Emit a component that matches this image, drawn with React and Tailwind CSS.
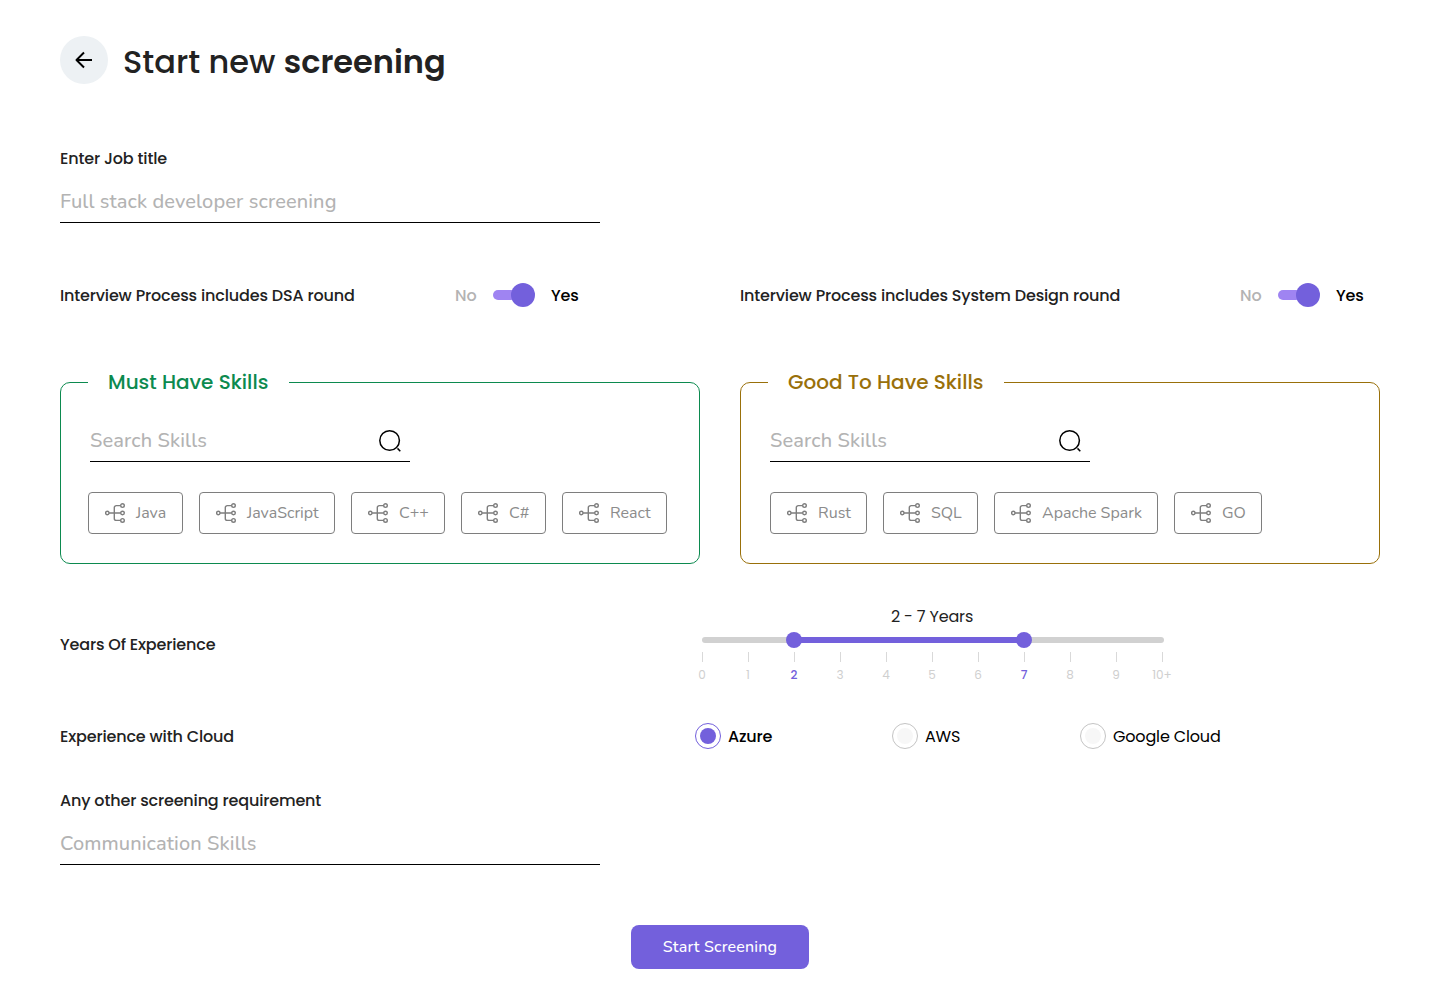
import { useState } from 'react'

const MUST_HAVE = [
  { name: 'Java', className: 'w-[95px]' },
  { name: 'JavaScript', className: 'w-[136px]' },
  { name: 'C++', className: 'w-[94px]' },
  { name: 'C#', className: 'w-[85px]' },
  { name: 'React', className: 'w-[105px]' },
]

const GOOD_TO_HAVE = [
  { name: 'Rust', className: 'w-[97px]' },
  { name: 'SQL', className: 'w-[95px]' },
  { name: 'Apache Spark', className: 'w-[164px]' },
  { name: 'GO', className: 'w-[88px]' },
]

const YEARS = ['0', '1', '2', '3', '4', '5', '6', '7', '8', '9', '10+']

const CLOUDS = [
  { name: 'Azure', className: 'w-[197px]' },
  { name: 'AWS', className: 'w-[188px]' },
  { name: 'Google Cloud', className: 'w-[150px]' },
]

function BackIcon() {
  return (
    <svg width="24" height="24" viewBox="0 0 24 24" fill="none" stroke="#000" strokeWidth="2">
      <path d="M20 12H4.8M12 4.5L4.5 12l7.5 7.5" strokeLinejoin="round" />
    </svg>
  )
}

function SearchIcon() {
  return (
    <svg width="24" height="24" viewBox="0 0 24 24" fill="none" stroke="#000" strokeWidth="1.5">
      <circle cx="11.6" cy="11.5" r="9.8" />
      <path d="M19.5 19.4l2.8 2.8" />
    </svg>
  )
}

function SkillIcon() {
  return (
    <svg className="shrink-0" width="20" height="20" viewBox="0 0 20 20" fill="none" stroke="#7e7e7e" strokeWidth="1.4">
      <circle cx="2.3" cy="10" r="1.7" />
      <circle cx="17.5" cy="2.6" r="1.8" />
      <circle cx="17.5" cy="10" r="1.8" />
      <circle cx="17.5" cy="17.4" r="1.8" />
      <path d="M4 10h11.7M15.7 2.6h-4.4a2 2 0 0 0-2 2v10.8a2 2 0 0 0 2 2h4.4" />
    </svg>
  )
}

function TextField({ label, placeholder }) {
  return (
    <label className="block w-[540px]">
      <span className="block pt-px leading-6 font-medium text-[#222]">{label}</span>
      <input
        type="text"
        placeholder={placeholder}
        className="mt-[11px] block h-[41px] w-full border-b border-black pb-0.5 font-['Nunito','Noto_Sans',sans-serif] text-xl font-medium tracking-[0.005em] outline-none placeholder:text-[#b3b3b3]"
      />
    </label>
  )
}

function Toggle({ label, className }) {
  const [on, setOn] = useState(true)

  return (
    <div className="flex h-6 items-center">
      <span className={`pt-0.5 font-medium whitespace-nowrap text-[#222] ${className}`}>{label}</span>
      <span className={`w-[22px] pt-0.5 font-medium ${on ? 'text-[#b3b3b3]' : 'text-black'}`}>No</span>
      <button
        type="button"
        onClick={() => setOn(!on)}
        className={`mx-4 flex h-6 w-[42px] items-center ${on ? '' : 'flex-row-reverse'}`}
      >
        <span className="-mx-[5px] ml-0 h-2.5 w-[23px] shrink-0 rounded-full bg-[#9f84f2]"></span>
        <span className="size-6 shrink-0 rounded-full bg-[#7360dc]"></span>
      </button>
      <span className={`w-7 pt-0.5 font-medium ${on ? 'text-black' : 'text-[#b3b3b3]'}`}>Yes</span>
    </div>
  )
}

function SkillPanel({ title, skills, className, legendClassName, listClassName }) {
  return (
    <fieldset className={`h-[198px] w-[640px] rounded-[10px] border ${className}`}>
      <legend
        className={`ml-[27px] h-[33px] pl-5 text-xl leading-8 font-medium tracking-normal whitespace-nowrap ${legendClassName}`}
      >
        {title}
      </legend>
      <div className="mt-[21px] ml-[29px] flex h-[42px] w-80 items-center justify-between border-b border-black pr-2">
        <input
          type="text"
          placeholder="Search Skills"
          className="w-60 font-['Nunito','Noto_Sans',sans-serif] text-xl font-medium tracking-[0.005em] outline-none placeholder:text-[#b3b3b3]"
        />
        <SearchIcon />
      </div>
      <div className={`mt-[30px] flex gap-4 ${listClassName}`}>
        {skills.map((skill) => (
          <button
            key={skill.name}
            type="button"
            className={`flex h-[42px] items-center gap-[11px] rounded-[4px] border border-[#7e7e7e] pl-4 font-['Nunito','Open_Sans',sans-serif] tracking-normal whitespace-nowrap text-[#8c8c8c] ${skill.className}`}
          >
            <SkillIcon />
            {skill.name}
          </button>
        ))}
      </div>
    </fieldset>
  )
}

function ExperienceSlider({ from, to }) {
  return (
    <div className="w-[462px]">
      <p className="pr-0.5 text-center leading-6 text-[#222]">
        {from} - {to} Years
      </p>
      <div className="relative mt-2 h-1.5 rounded-full bg-[#d1d1d1]">
        <div
          className="absolute h-1.5 bg-[#7360dc]"
          style={{ left: from * 46, width: (to - from) * 46 }}
        ></div>
        {[from, to].map((value) => (
          <span
            key={value}
            className="absolute -top-[5px] size-4 -translate-x-1/2 rounded-full bg-[#7360dc]"
            style={{ left: value * 46 }}
          ></span>
        ))}
      </div>
      <div className="mt-[9px] flex w-[461px] justify-between">
        {YEARS.map((year, i) => (
          <div key={year} className="flex w-px flex-col items-center">
            <span className="h-2.5 w-px bg-[#d9d9d9]"></span>
            <span
              className={`mt-1 mr-px text-xs leading-[18px] tracking-normal whitespace-nowrap ${
                i === from || i === to ? 'font-medium text-[#7360dc]' : 'text-[#cfcfcf]'
              }`}
            >
              {year}
            </span>
          </div>
        ))}
      </div>
    </div>
  )
}

export default function App() {
  const [cloud, setCloud] = useState('Azure')

  return (
    <div className="min-h-screen bg-white px-[60px] pt-9 pb-7 font-['Poppins','Inter',sans-serif] text-base tracking-[-0.01em]">
      <header className="flex h-12 items-center">
        <button type="button" className="flex size-12 items-center justify-center rounded-full bg-[#edf1f4]">
          <BackIcon />
        </button>
        <h1 className="mt-1 ml-[15px] text-[32px] font-medium tracking-normal whitespace-nowrap text-[#222]">
          Start new <span className="font-semibold">screening</span>
        </h1>
      </header>

      <div className="mt-[62px]">
        <TextField label="Enter Job title" placeholder="Full stack developer screening" />
      </div>

      <div className="mt-[60px] flex">
        <Toggle label="Interview Process includes DSA round" className="w-[395px]" />
        <div className="ml-[161px]">
          <Toggle label="Interview Process includes System Design round" className="w-[500px]" />
        </div>
      </div>

      <div className="mt-[59px] flex gap-10">
        <SkillPanel
          title="Must Have Skills"
          skills={MUST_HAVE}
          className="border-[#0c8a4f]"
          legendClassName="w-[201px] text-[#0c8a4f]"
          listClassName="ml-[27px]"
        />
        <SkillPanel
          title="Good To Have Skills"
          skills={GOOD_TO_HAVE}
          className="border-[#99700a]"
          legendClassName="w-[236px] text-[#99700a]"
          listClassName="ml-[29px]"
        />
      </div>

      <div className="mt-[41px] flex items-center">
        <span className="w-[642px] font-medium text-[#222]">Years Of Experience</span>
        <ExperienceSlider from={2} to={7} />
      </div>

      <div className="mt-[39px] flex h-[26px] items-center">
        <span className="w-[635px] pt-0.5 font-medium text-[#222]">Experience with Cloud</span>
        {CLOUDS.map((c) => (
          <button
            key={c.name}
            type="button"
            onClick={() => setCloud(c.name)}
            className={`flex items-center gap-[7px] whitespace-nowrap text-black ${c.className}`}
          >
            <span
              className={`flex size-[26px] items-center justify-center rounded-full border ${
                cloud === c.name ? 'border-[#7360dc]' : 'border-[#c4c4c4]'
              }`}
            >
              <span className={`size-4 rounded-full ${cloud === c.name ? 'bg-[#7360dc]' : 'bg-[#f7f7f7]'}`}></span>
            </span>
            <span className={`pt-0.5 ${cloud === c.name ? 'font-medium' : ''}`}>{c.name}</span>
          </button>
        ))}
      </div>

      <div className="mt-[39px]">
        <TextField label="Any other screening requirement" placeholder="Communication Skills" />
      </div>

      <div className="mt-[60px] flex justify-center">
        <button
          type="button"
          className="h-11 w-[178px] rounded-lg bg-[#7360dc] font-['Nunito','Noto_Sans',sans-serif] font-medium tracking-[0.01em] text-white"
        >
          Start Screening
        </button>
      </div>
    </div>
  )
}
